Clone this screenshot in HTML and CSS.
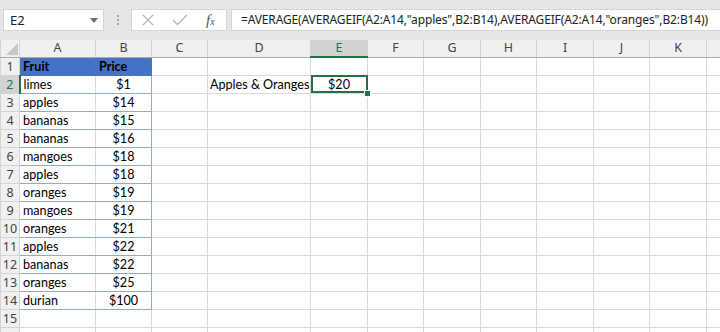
FILE: index.html
```html
<!DOCTYPE html>
<html lang="en">
<head>
    <meta charset="UTF-8">
    <meta name="viewport" content="width=device-width, initial-scale=1.0">
    <link rel="stylesheet" href="styles.css">
</head>
<body>
    <div class="toolbar">
        <div class="name-box">
            <span>E2</span>
            <svg class="drop" width="8" height="5" viewBox="0 0 8 5"><path d="M0 0 H8 L4 5 Z" fill="#707070"/></svg>
        </div>
        <div class="grip">
            <span></span><span></span><span></span>
        </div>
        <div class="fn-box">
            <svg width="12" height="12" viewBox="0 0 12 12"><path d="M1 1 L11 11 M11 1 L1 11" stroke="#b5b5b5" stroke-width="1.2" fill="none"/></svg>
            <svg width="16" height="12" viewBox="0 0 16 12"><path d="M1 6 L5.5 10.5 L15 1" stroke="#b5b5b5" stroke-width="1.4" fill="none"/></svg>
            <span class="fx">f<sub>x</sub></span>
        </div>
        <div class="formula">=AVERAGE(AVERAGEIF(A2:A14,"apples",B2:B14),AVERAGEIF(A2:A14,"oranges",B2:B14))</div>
    </div>

    <div class="sheet">
        <table class="grid">
            <colgroup>
                <col class="w-row">
                <col class="w-a">
                <col class="w-b">
                <col class="w-c">
                <col class="w-d">
                <col class="w-e">
                <col class="w-f">
                <col class="w-g">
                <col class="w-h">
                <col class="w-i">
                <col class="w-j">
                <col class="w-k">
                <col class="w-l">
            </colgroup>
            <thead>
                <tr class="cols">
                    <th class="corner"><svg width="12" height="12" viewBox="0 0 12 12"><path d="M12 0 V12 H0 Z" fill="#c8c8c8"/></svg></th>
                    <th>A</th><th>B</th><th>C</th><th>D</th><th class="sel">E</th><th>F</th><th>G</th><th>H</th><th>I</th><th>J</th><th>K</th><th></th>
                </tr>
            </thead>
            <tbody>
                <tr class="odd">
                    <th>1</th><td class="thead">Fruit</td><td class="thead">Price</td><td></td><td></td><td></td><td></td><td></td><td></td><td></td><td></td><td></td><td></td>
                </tr>
                <tr class="even">
                    <th class="sel">2</th><td class="fruit">limes</td><td class="price">$1</td><td></td><td class="label">Apples &amp; Oranges</td><td class="active">$20<i class="handle"></i></td><td></td><td></td><td></td><td></td><td></td><td></td><td></td>
                </tr>
                <tr class="odd">
                    <th>3</th><td class="fruit">apples</td><td class="price">$14</td><td></td><td></td><td></td><td></td><td></td><td></td><td></td><td></td><td></td><td></td>
                </tr>
                <tr class="even">
                    <th>4</th><td class="fruit">bananas</td><td class="price">$15</td><td></td><td></td><td></td><td></td><td></td><td></td><td></td><td></td><td></td><td></td>
                </tr>
                <tr class="odd">
                    <th>5</th><td class="fruit">bananas</td><td class="price">$16</td><td></td><td></td><td></td><td></td><td></td><td></td><td></td><td></td><td></td><td></td>
                </tr>
                <tr class="even">
                    <th>6</th><td class="fruit">mangoes</td><td class="price">$18</td><td></td><td></td><td></td><td></td><td></td><td></td><td></td><td></td><td></td><td></td>
                </tr>
                <tr class="odd">
                    <th>7</th><td class="fruit">apples</td><td class="price">$18</td><td></td><td></td><td></td><td></td><td></td><td></td><td></td><td></td><td></td><td></td>
                </tr>
                <tr class="even">
                    <th>8</th><td class="fruit">oranges</td><td class="price">$19</td><td></td><td></td><td></td><td></td><td></td><td></td><td></td><td></td><td></td><td></td>
                </tr>
                <tr class="odd">
                    <th>9</th><td class="fruit">mangoes</td><td class="price">$19</td><td></td><td></td><td></td><td></td><td></td><td></td><td></td><td></td><td></td><td></td>
                </tr>
                <tr class="even">
                    <th>10</th><td class="fruit">oranges</td><td class="price">$21</td><td></td><td></td><td></td><td></td><td></td><td></td><td></td><td></td><td></td><td></td>
                </tr>
                <tr class="odd">
                    <th>11</th><td class="fruit">apples</td><td class="price">$22</td><td></td><td></td><td></td><td></td><td></td><td></td><td></td><td></td><td></td><td></td>
                </tr>
                <tr class="even">
                    <th>12</th><td class="fruit">bananas</td><td class="price">$22</td><td></td><td></td><td></td><td></td><td></td><td></td><td></td><td></td><td></td><td></td>
                </tr>
                <tr class="odd">
                    <th>13</th><td class="fruit">oranges</td><td class="price">$25</td><td></td><td></td><td></td><td></td><td></td><td></td><td></td><td></td><td></td><td></td>
                </tr>
                <tr class="even">
                    <th>14</th><td class="fruit last">durian</td><td class="price last">$100</td><td></td><td></td><td></td><td></td><td></td><td></td><td></td><td></td><td></td><td></td>
                </tr>
                <tr class="odd">
                    <th>15</th><td></td><td></td><td></td><td></td><td></td><td></td><td></td><td></td><td></td><td></td><td></td><td></td>
                </tr>
                <tr class="even">
                    <th>16</th><td></td><td></td><td></td><td></td><td></td><td></td><td></td><td></td><td></td><td></td><td></td><td></td>
                </tr>
            </tbody>
        </table>
    </div>
</body>
</html>
```

FILE: styles.css
```css
/* page */
body {
    margin: 0;
    width: 720px;
    height: 332px;
    overflow: hidden;
    background: #fff;
    font-family: "Lato", "Liberation Sans", sans-serif;
}

/* formula bar */
.toolbar {
    height: 40px;
    background: #e6e6e6;
    display: flex;
    align-items: flex-start;
    padding-top: 9px;
    box-sizing: border-box;
}

.name-box {
    margin-left: 3px;
    width: 101px;
    height: 22px;
    background: #fff;
    border: 1px solid #d6d6d6;
    box-sizing: border-box;
    display: flex;
    align-items: center;
    justify-content: space-between;
    padding: 0 5px 0 6px;
    font-family: "Noto Sans", "Liberation Sans", sans-serif;
    font-size: 13px;
    color: #222;
}

.grip {
    width: 27px;
    height: 22px;
    display: flex;
    flex-direction: column;
    align-items: center;
    justify-content: center;
    gap: 2px;
}

.grip span {
    width: 2px;
    height: 2px;
    background: #a8a8a8;
}

.fn-box {
    width: 96px;
    height: 22px;
    background: #fff;
    border: 1px solid #d6d6d6;
    box-sizing: border-box;
    display: flex;
    align-items: center;
    padding-left: 10px;
    gap: 18px;
}

.fx {
    font-family: "Liberation Serif", serif;
    font-style: italic;
    font-size: 15px;
    color: #555;
}

.fx sub {
    font-size: 10px;
    vertical-align: 0;
}

.formula {
    flex: 1;
    margin-left: 4px;
    height: 22px;
    background: #fff;
    border: 1px solid #d6d6d6;
    border-right: none;
    box-sizing: border-box;
    padding-left: 9px;
    line-height: 20px;
    font-family: "Noto Sans", "Liberation Sans", sans-serif;
    font-size: 12px;
    letter-spacing: -0.14px;
    color: #222;
    white-space: nowrap;
    overflow: hidden;
}

/* grid */
.sheet {
    overflow: hidden;
}

.grid {
    border-collapse: collapse;
    table-layout: fixed;
    width: 730px;
}

.w-row { width: 19px; }
.w-a { width: 76px; }
.w-b { width: 56px; }
.w-c { width: 56px; }
.w-d { width: 103px; }
.w-e { width: 57px; }
.w-f { width: 56px; }
.w-g { width: 57px; }
.w-h { width: 56px; }
.w-i { width: 57px; }
.w-j { width: 56px; }
.w-k { width: 57px; }
.w-l { width: 24px; }

.grid td, .grid th {
    padding: 0;
    border: 1px solid #dadada;
    overflow: hidden;
    white-space: nowrap;
}

.grid th {
    background: #f0f0f0;
    border-color: #d4d4d4;
    font-family: "Noto Sans", "Liberation Sans", sans-serif;
    font-weight: normal;
    font-size: 12.5px;
    color: #444;
}

.cols th {
    height: 16px;
    line-height: 16px;
    border-top: none;
    border-bottom-color: #ababab;
}

.cols th.sel {
    background: #d2d2d2;
    color: #217346;
    border-bottom: 2px solid #217346;
}

.corner {
    text-align: right;
    vertical-align: bottom;
}

.corner svg {
    display: block;
    margin: 0 1px 2px auto;
}

tbody th {
    text-align: center;
    border-right-color: #ababab;
}

tbody th.sel {
    background: #d2d2d2;
    color: #217346;
    border-right: 2px solid #217346;
}

tbody tr.odd { height: 18px; }
tbody tr.even { height: 17px; }

.grid td {
    font-size: 12.6px;
    color: #000;
    line-height: 15px;
}

/* the data table */
.thead {
    background: #4472c4;
    color: #fff;
    font-weight: bold;
    padding-left: 3px !important;
    border-color: #4472c4 !important;
}

.fruit {
    padding-left: 3px !important;
    border-bottom-color: #8ea9db !important;
}

.price {
    text-align: center;
    border-bottom-color: #8ea9db !important;
    border-right-color: #8ea9db !important;
}

.last {
    border-bottom-color: #8ea9db !important;
}

.label {
    padding-left: 2px !important;
    overflow: visible !important;
}

.active {
    position: relative;
    text-align: center;
    outline: 2px solid #217346;
    outline-offset: -2px;
    overflow: visible !important;
}

.handle {
    position: absolute;
    right: -4px;
    bottom: -4px;
    width: 5px;
    height: 5px;
    background: #217346;
    border: 1px solid #fff;
}
```
